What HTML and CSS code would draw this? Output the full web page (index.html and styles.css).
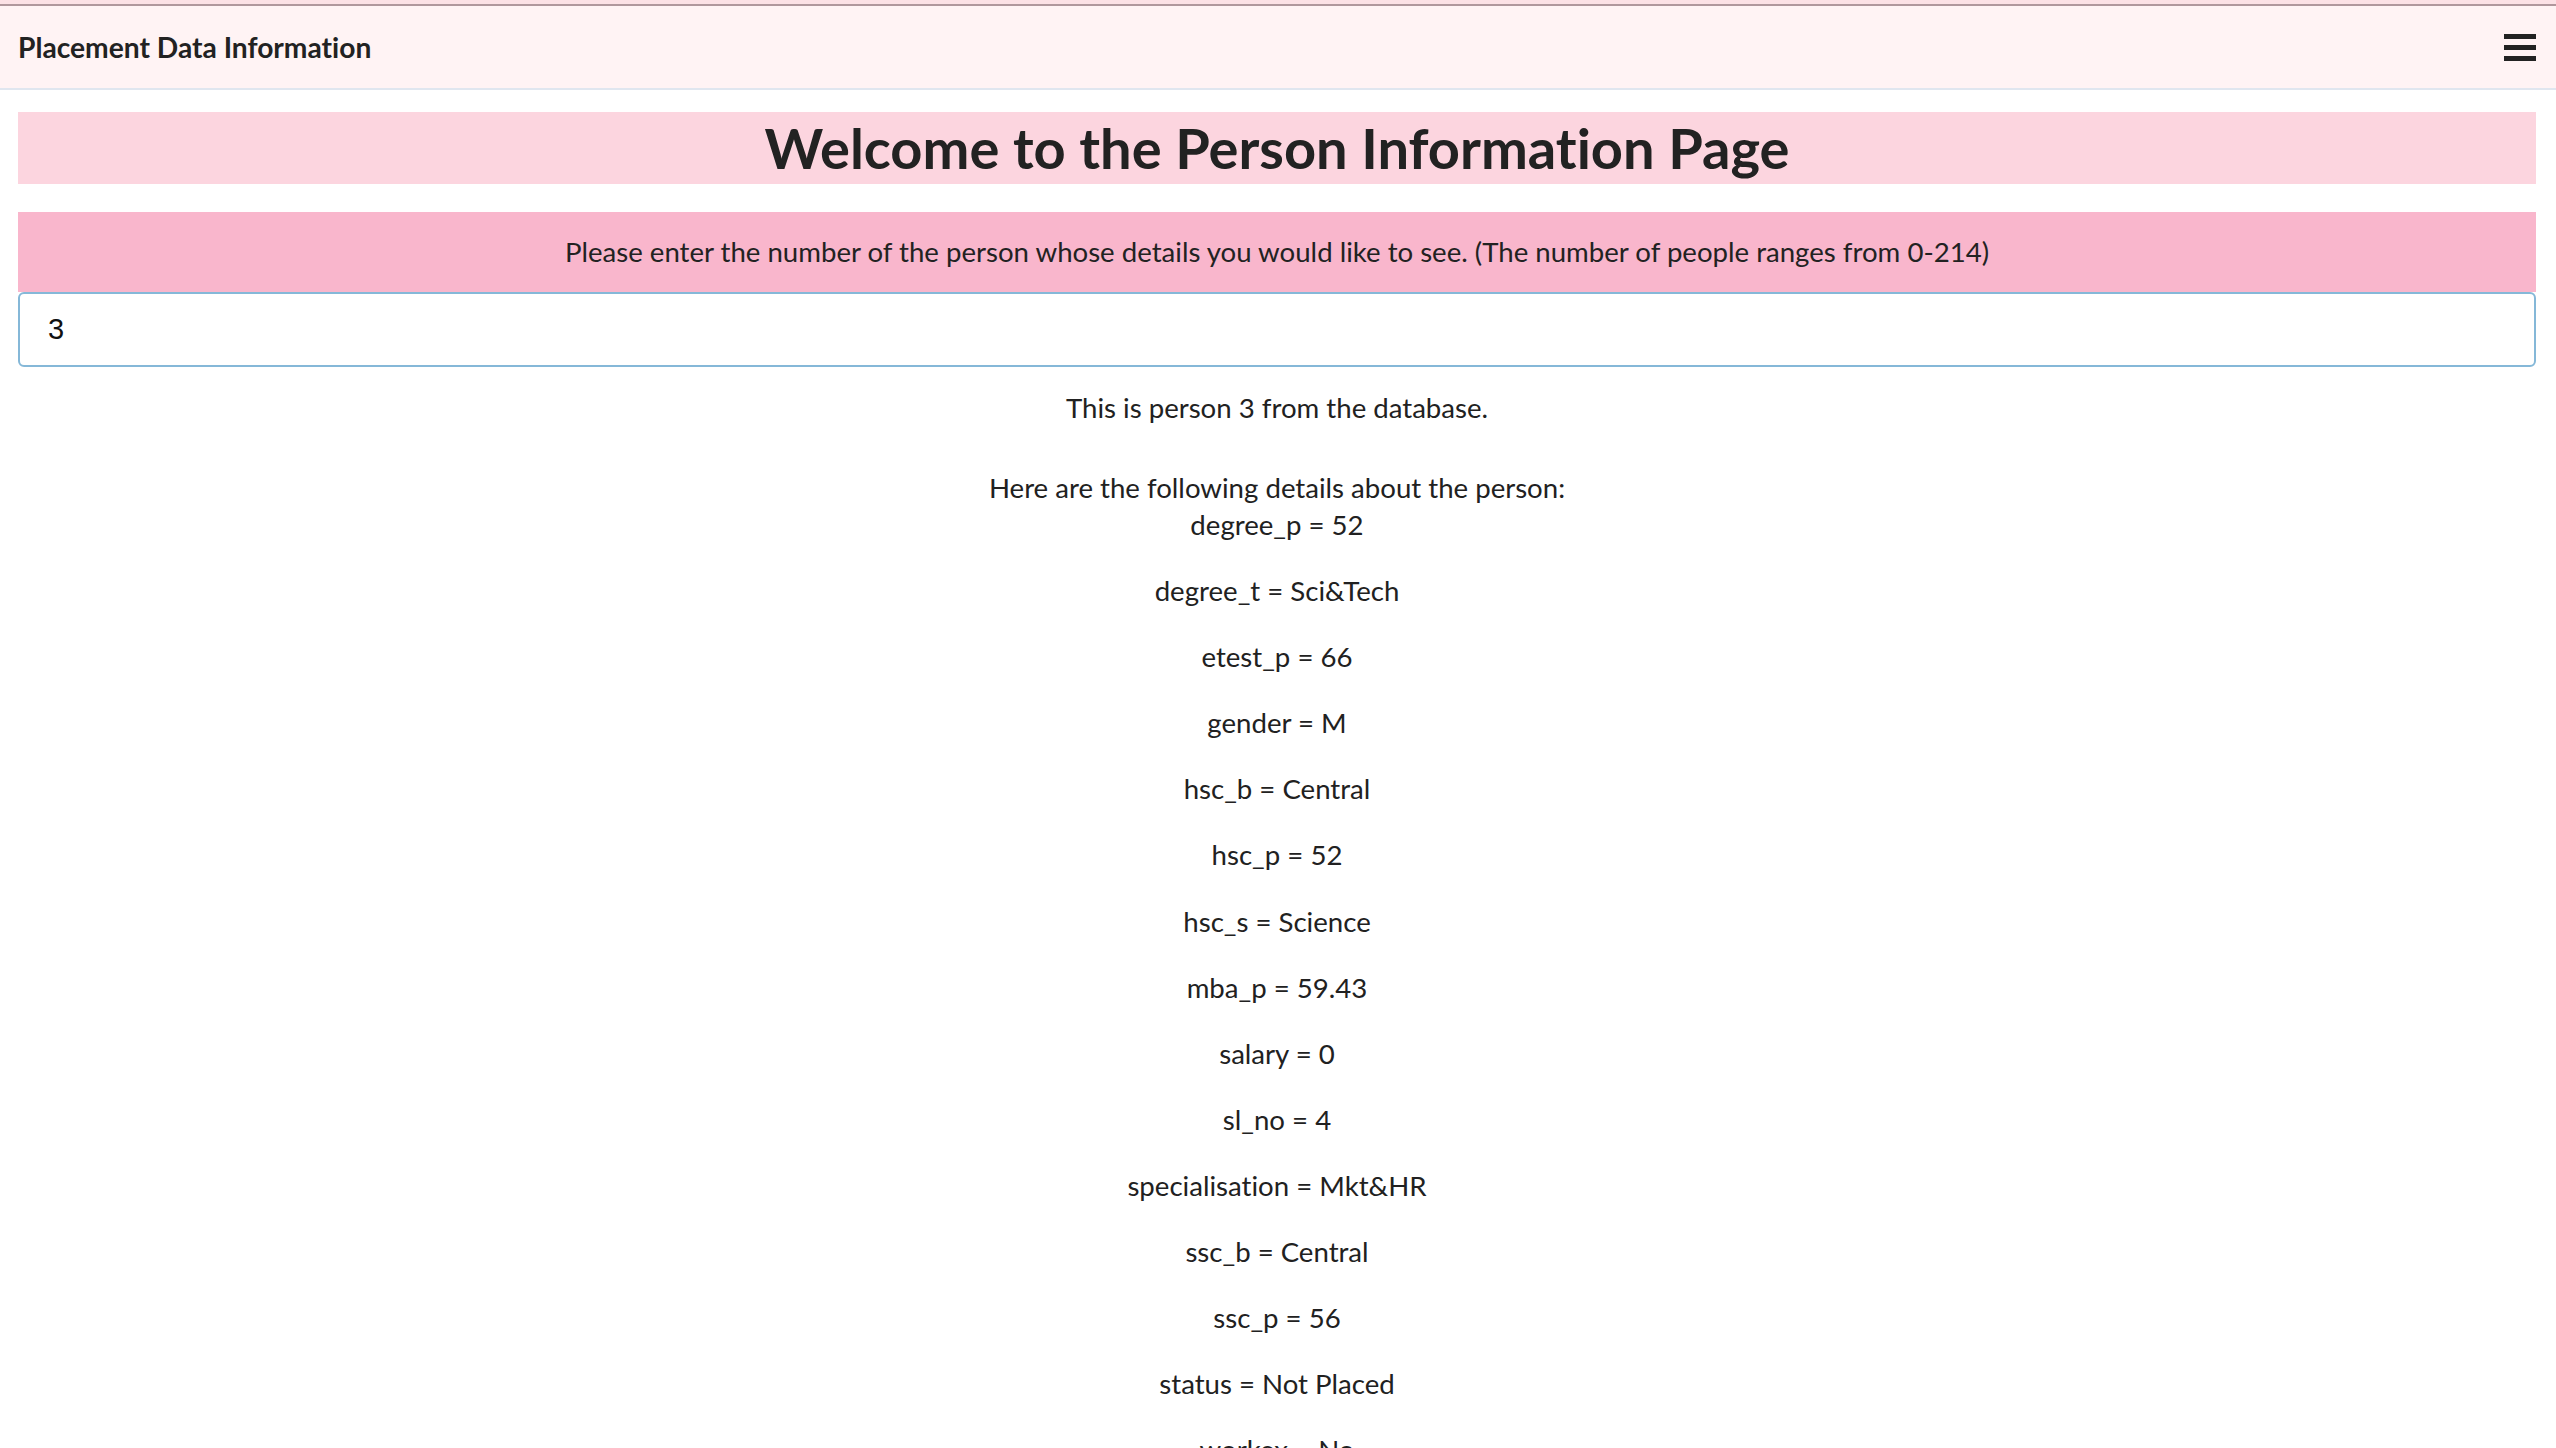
FILE: index.html
```html
<!DOCTYPE html>
<html lang="en">
<head>
<meta charset="utf-8">
<title>Placement Data Information</title>
<link rel="stylesheet" href="styles.css">
</head>
<body>
<div class="topband"></div>
<nav class="navbar">
  <span class="brand">Placement Data Information</span>
  <button class="toggler" aria-label="Toggle navigation">
    <svg width="32" height="27" viewBox="0 0 32 27"><rect x="0" y="0" width="32" height="5" fill="#222"/><rect x="0" y="11" width="32" height="5" fill="#222"/><rect x="0" y="22" width="32" height="5" fill="#222"/></svg>
  </button>
</nav>
<main class="container">
  <div class="title-box"><h1 class="title">Welcome to the Person Information Page</h1></div>
  <div class="prompt-box">Please enter the number of the person whose details you would like to see. (The number of people ranges from 0-214)</div>
  <input class="num-input" type="text" value="3">
  <p class="intro">This is person 3 from the database.<br><br>Here are the following details about the person:</p>
  <div class="details">
    <p class="item">degree_p = 52</p>
    <p class="item">degree_t = Sci&amp;Tech</p>
    <p class="item">etest_p = 66</p>
    <p class="item">gender = M</p>
    <p class="item">hsc_b = Central</p>
    <p class="item">hsc_p = 52</p>
    <p class="item">hsc_s = Science</p>
    <p class="item">mba_p = 59.43</p>
    <p class="item">salary = 0</p>
    <p class="item">sl_no = 4</p>
    <p class="item">specialisation = Mkt&amp;HR</p>
    <p class="item">ssc_b = Central</p>
    <p class="item">ssc_p = 56</p>
    <p class="item">status = Not Placed</p>
    <p class="item">workex = No</p>
  </div>
</main>
</body>
</html>
```
FILE: styles.css
```css
html, body {
  margin: 0;
  padding: 0;
  background: #ffffff;
}
body {
  font-family: Lato, "Open Sans", sans-serif;
  font-variant-ligatures: none;
  color: #212121;
  font-size: 27.6px;
  line-height: 1.5;
}
.topband {
  height: 4px;
  background: #fce1e5;
  border-bottom: 2px solid #b0979c;
}
.navbar {
  height: 82px;
  background: #fff3f4;
  border-bottom: 2px solid #e0e6ef;
  display: flex;
  align-items: center;
  justify-content: space-between;
  padding: 0 20px 0 18px;
}
.brand {
  font-weight: 700;
  font-size: 28.2px;
  color: #222;
}
.toggler {
  border: 0;
  background: none;
  padding: 0;
  display: flex;
}
.container {
  padding: 22px 20px 0 18px;
  text-align: center;
}
.title-box {
  background: #fcd5df;
  height: 72px;
  display: flex;
  align-items: center;
  justify-content: center;
}
.title {
  margin: 0;
  font-size: 56px;
  font-weight: 700;
  line-height: 72px;
  color: #222;
}
.prompt-box {
  margin-top: 28px;
  background: #f9b6cc;
  height: 80px;
  display: flex;
  align-items: center;
  justify-content: center;
  color: #222;
}
.num-input {
  display: block;
  box-sizing: border-box;
  width: 100%;
  height: 75px;
  margin: 0;
  border: 2px solid #85b8d8;
  border-radius: 6px;
  padding: 0 28px;
  font-family: "Liberation Sans", Arial, sans-serif;
  font-size: 29px;
  color: #111;
  background: #fff;
  outline: none;
}
.intro {
  margin: 21px 0 0;
  line-height: 40px;
}
.details {
  margin-top: -3px;
}
.item {
  margin: 0 0 26.4px;
  line-height: 39.7px;
}
```
